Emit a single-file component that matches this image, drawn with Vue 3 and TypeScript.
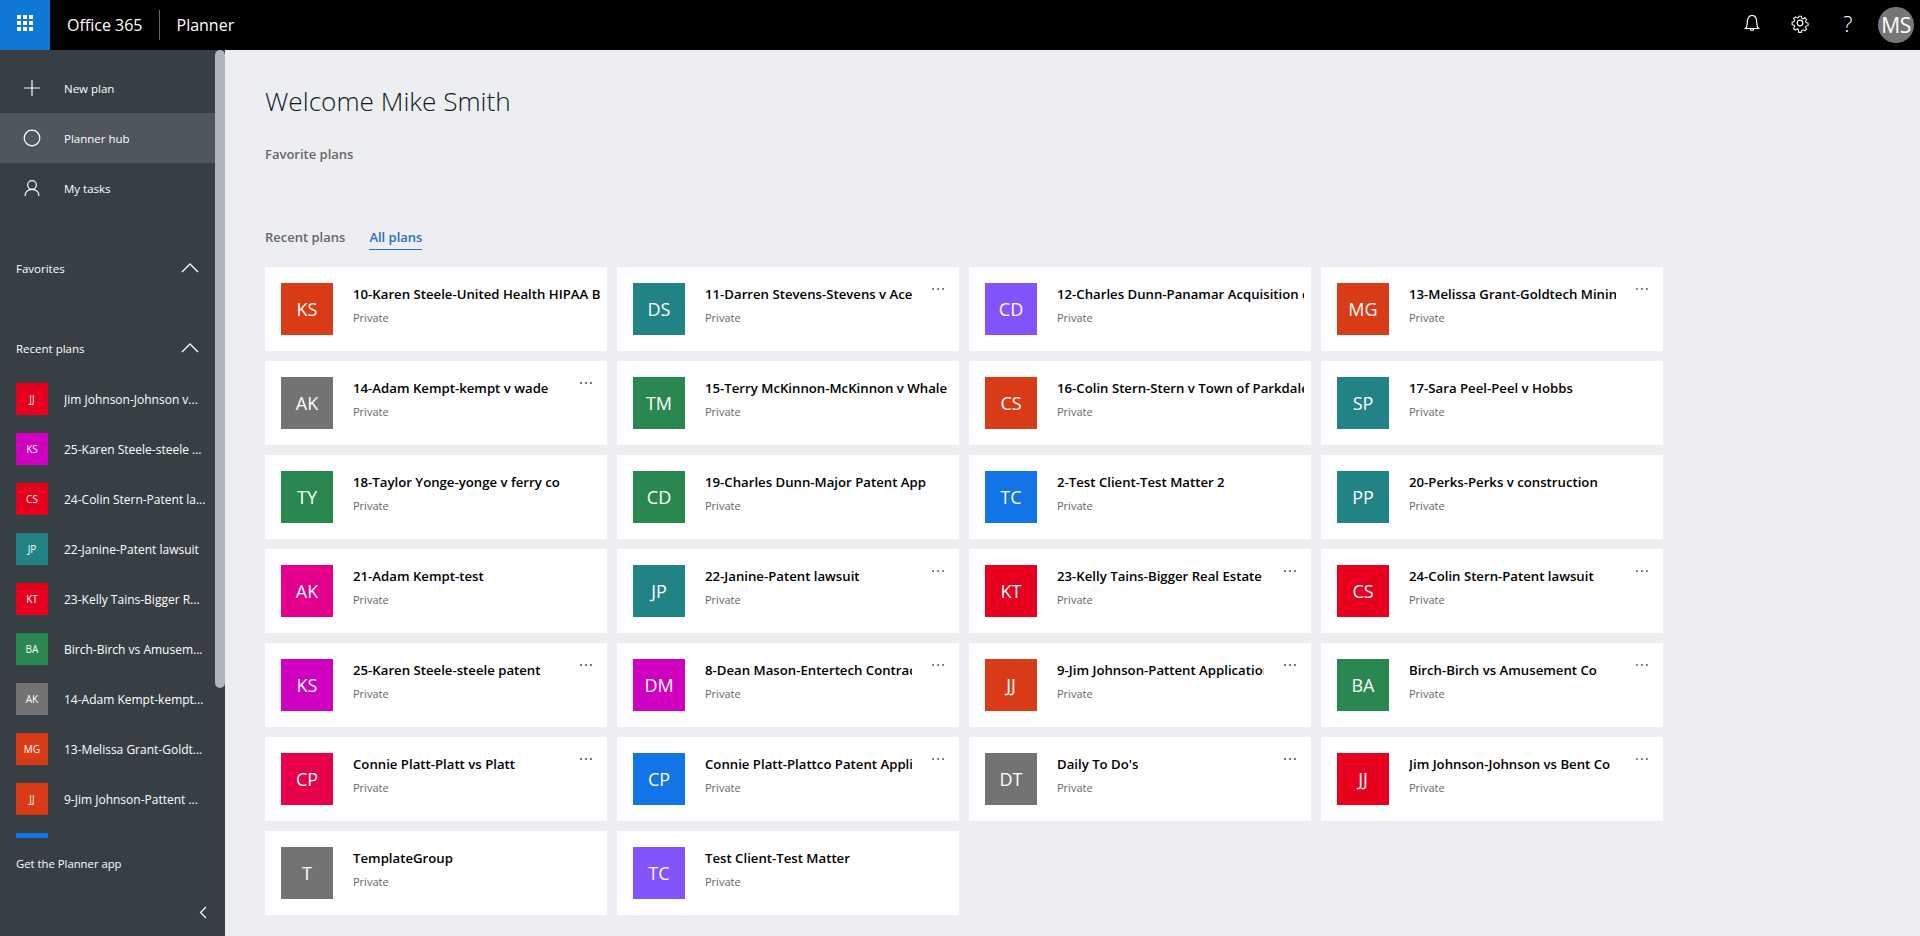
<script setup lang="ts">
interface Plan { name: string; initials: string; color: string; menu?: boolean }
const c = {
  orange: '#d83b16', teal: '#218386', purple: '#8254fb', green: '#2b8750', blue: '#1274e7',
  gray: '#737373', pink: '#e3008c', magenta: '#cf00c0', red: '#e8001f', crimson: '#e8004a'
}
const plans: Plan[] = [
  { name: '10-Karen Steele-United Health HIPAA Breach', initials: 'KS', color: c.orange },
  { name: '11-Darren Stevens-Stevens v Ace', initials: 'DS', color: c.teal, menu: true },
  { name: '12-Charles Dunn-Panamar Acquisition c', initials: 'CD', color: c.purple },
  { name: '13-Melissa Grant-Goldtech Mining Dispute', initials: 'MG', color: c.orange, menu: true },
  { name: '14-Adam Kempt-kempt v wade', initials: 'AK', color: c.gray, menu: true },
  { name: '15-Terry McKinnon-McKinnon v Whale', initials: 'TM', color: c.green },
  { name: '16-Colin Stern-Stern v Town of Parkdale', initials: 'CS', color: c.orange },
  { name: '17-Sara Peel-Peel v Hobbs', initials: 'SP', color: c.teal },
  { name: '18-Taylor Yonge-yonge v ferry co', initials: 'TY', color: c.green },
  { name: '19-Charles Dunn-Major Patent App', initials: 'CD', color: c.green },
  { name: '2-Test Client-Test Matter 2', initials: 'TC', color: c.blue },
  { name: '20-Perks-Perks v construction', initials: 'PP', color: c.teal },
  { name: '21-Adam Kempt-test', initials: 'AK', color: c.pink },
  { name: '22-Janine-Patent lawsuit', initials: 'JP', color: c.teal, menu: true },
  { name: '23-Kelly Tains-Bigger Real Estate', initials: 'KT', color: c.red, menu: true },
  { name: '24-Colin Stern-Patent lawsuit', initials: 'CS', color: c.red, menu: true },
  { name: '25-Karen Steele-steele patent', initials: 'KS', color: c.magenta, menu: true },
  { name: '8-Dean Mason-Entertech Contract Dispute', initials: 'DM', color: c.magenta, menu: true },
  { name: '9-Jim Johnson-Pattent Application', initials: 'JJ', color: c.orange, menu: true },
  { name: 'Birch-Birch vs Amusement Co', initials: 'BA', color: c.green, menu: true },
  { name: 'Connie Platt-Platt vs Platt', initials: 'CP', color: c.crimson, menu: true },
  { name: 'Connie Platt-Plattco Patent Application', initials: 'CP', color: c.blue, menu: true },
  { name: "Daily To Do's", initials: 'DT', color: c.gray, menu: true },
  { name: 'Jim Johnson-Johnson vs Bent Co', initials: 'JJ', color: c.red, menu: true },
  { name: 'TemplateGroup', initials: 'T', color: c.gray },
  { name: 'Test Client-Test Matter', initials: 'TC', color: c.purple }
]
const recent = [
  { name: 'Jim Johnson-Johnson v...', initials: 'JJ', color: c.red },
  { name: '25-Karen Steele-steele ...', initials: 'KS', color: c.magenta },
  { name: '24-Colin Stern-Patent la...', initials: 'CS', color: c.red },
  { name: '22-Janine-Patent lawsuit', initials: 'JP', color: c.teal },
  { name: '23-Kelly Tains-Bigger R...', initials: 'KT', color: c.red },
  { name: 'Birch-Birch vs Amusem...', initials: 'BA', color: c.green },
  { name: '14-Adam Kempt-kempt...', initials: 'AK', color: c.gray },
  { name: '13-Melissa Grant-Goldt...', initials: 'MG', color: c.orange },
  { name: '9-Jim Johnson-Pattent ...', initials: 'JJ', color: c.orange },
  { name: '', initials: '', color: c.blue }
]
</script>

<template>
  <div class="app">
    <header class="topbar">
      <div class="waffle">
        <svg width="16" height="16" viewBox="0 0 16 16" fill="#fff">
          <rect v-for="i in 9" :key="i" :x="(i - 1) % 3 * 6" :y="Math.floor((i - 1) / 3) * 6" width="4" height="4" />
        </svg>
      </div>
      <span class="brand">Office 365</span>
      <span class="divider"></span>
      <span class="product">Planner</span>
      <div class="top-actions">
        <svg class="top-icon bell" width="18" height="18" viewBox="0 0 18 18" fill="none" stroke="#fff" stroke-width="1.2">
          <path d="M2.500 14.500c1-.9 1.700-2 1.700-5.500C4.200 4.500 6 1.300 9 1.300S13.800 4.500 13.800 9c0 3.500.7 4.600 1.700 5.500z" />
          <path d="M7.300 14.700c0 1 .7 1.600 1.700 1.600s1.700-.6 1.700-1.600" />
        </svg>
        <svg class="top-icon gear" width="20" height="20" viewBox="0 0 20 20" fill="none" stroke="#fff" stroke-width="1.2">
          <circle cx="10" cy="10" r="2.800" />
          <path d="M8.500 2h3l.5 2.400 1.500.7 2.100-1.300 2 2.100-1.300 2 .6 1.500 2.400.6v3l-2.400.5-.6 1.500 1.300 2.100-2 2-2.100-1.300-1.500.6-.5 2.400h-3L8 17.400l-1.500-.6-2.100 1.300-2-2 1.300-2.100-.6-1.500L.7 11.900v-3l2.400-.6.6-1.500-1.300-2 2-2.100 2.100 1.300 1.500-.7z" transform="translate(10 10) scale(.86) translate(-9.900 -9.900)" />
        </svg>
        <span class="help">?</span>
        <span class="me">MS</span>
      </div>
    </header>

    <div class="body">
      <aside class="sidebar">
        <div class="side-scroll">
          <nav class="nav">
            <a class="nav-row">
              <svg width="18" height="18" viewBox="0 0 18 18" stroke="#fff" stroke-width="1.200"><path d="M9 1v16M1 9h16" /></svg>
              <span>New plan</span>
            </a>
            <a class="nav-row active">
              <svg width="18" height="18" viewBox="0 0 18 18" fill="none" stroke="#fff" stroke-width="1.200"><circle cx="9" cy="9" r="7.800" /></svg>
              <span>Planner hub</span>
            </a>
            <a class="nav-row">
              <svg width="18" height="18" viewBox="0 0 18 18" fill="none" stroke="#fff" stroke-width="1.200"><circle cx="9" cy="6" r="4.300" /><path d="M2 17c0-4 3-6.700 7-6.700s7 2.700 7 6.700" /></svg>
              <span>My tasks</span>
            </a>
          </nav>
          <div class="sec-head fav">
            <span>Favorites</span>
            <svg width="18" height="10" viewBox="0 0 18 10" fill="none" stroke="#fff" stroke-width="1.300"><path d="M1 9l8-8 8 8" /></svg>
          </div>
          <div class="sec-head rec">
            <span>Recent plans</span>
            <svg width="18" height="10" viewBox="0 0 18 10" fill="none" stroke="#fff" stroke-width="1.300"><path d="M1 9l8-8 8 8" /></svg>
          </div>
          <ul class="recent">
            <li v-for="(r, i) in recent" :key="i">
              <span class="mini" :style="{ background: r.color }">{{ r.initials }}</span>
              <span class="recent-name">{{ r.name }}</span>
            </li>
          </ul>
          <div class="scrollbar"></div>
        </div>
        <div class="side-foot">
          <div class="get-app">Get the Planner app</div>
          <div class="collapse">
            <svg width="8" height="13" viewBox="0 0 8 13" fill="none" stroke="#fff" stroke-width="1.200"><path d="M7 1L1.500 6.500 7 12" /></svg>
          </div>
        </div>
      </aside>

      <main class="main">
        <h1>Welcome Mike Smith</h1>
        <h2>Favorite plans</h2>
        <div class="tabs">
          <span class="tab">Recent plans</span>
          <span class="tab selected">All plans</span>
        </div>
        <section class="grid">
          <article v-for="p in plans" :key="p.name + p.initials" class="card">
            <div class="avatar" :style="{ background: p.color }">{{ p.initials }}</div>
            <div class="info" :class="{ short: p.menu }">
              <div class="title">{{ p.name }}</div>
              <div class="private">Private</div>
            </div>
            <div v-if="p.menu" class="more">
              <i></i><i></i><i></i>
            </div>
          </article>
        </section>
      </main>
    </div>
  </div>
</template>

<style>
html, body { margin: 0; height: 100%; overflow: hidden; }
</style>

<style scoped>
.app { width: 1920px; height: 936px; display: flex; flex-direction: column; font-family: "Open Sans", "Noto Sans", sans-serif; background: #edeef2; }
.topbar { height: 50px; flex: none; background: #000; display: flex; align-items: center; color: #fff; }
.waffle { width: 50px; height: 50px; background: #0f78d4; display: flex; align-items: center; justify-content: center; margin-right: 17px; padding-bottom: 4px; box-sizing: border-box; }
.brand { font-size: 16px; }
.divider { width: 1px; height: 30px; background: #666; margin: 0 17px 0 16px; }
.product { font-size: 16px; }
.top-actions { margin-left: auto; display: flex; align-items: center; }
.top-icon { display: block; margin-top: -4px; }
.bell { margin-right: 29px; }
.gear { margin-right: 33px; }
.help { font-size: 22px; font-weight: 300; width: 10px; line-height: 24px; text-align: center; margin-right: 25px; margin-top: -4px; }
.me { width: 36px; height: 36px; border-radius: 50%; background: #767676; font-size: 21px; display: flex; align-items: center; justify-content: center; margin-right: 6px; letter-spacing: -.5px; }
.body { flex: 1; display: flex; min-height: 0; }
.sidebar { width: 225px; flex: none; background: #373f45; color: #fff; display: flex; flex-direction: column; }
.side-scroll { position: relative; height: 788px; overflow: hidden; padding-top: 13px; box-sizing: border-box; flex: none; }
.scrollbar { position: absolute; top: 0; right: 0; width: 10px; height: 638px; background: #aeb6bc; border-radius: 5px; }
.nav-row { display: flex; align-items: center; height: 50px; padding-left: 23px; width: 215px; box-sizing: border-box; font-size: 11.5px; }
.nav-row svg { margin-right: 23px; flex: none; }
.nav-row.active { background: #4f565d; }
.sec-head { display: flex; justify-content: space-between; align-items: center; width: 215px; box-sizing: border-box; padding: 0 16px; font-size: 11.5px; height: 20px; }
.fav { margin-top: 45px; }
.rec { margin-top: 60px; }
.recent { list-style: none; margin: 25px 0 0; padding: 0; width: 215px; }
.recent li { display: flex; align-items: center; height: 32px; margin-bottom: 18px; padding-left: 16px; }
.mini { width: 32px; height: 32px; flex: none; font-size: 10px; display: flex; align-items: center; justify-content: center; margin-right: 16px; }
.recent-name { font-size: 12px; white-space: nowrap; overflow: hidden; }
.side-foot { flex: 1; position: relative; }
.get-app { font-size: 11.3px; padding: 17px 16px 0; line-height: 18px; }
.collapse { position: absolute; right: 18px; top: 68px; }
.collapse svg { display: block; }
.main { flex: 1; padding-left: 40px; min-width: 0; }
h1 { margin: 0; padding-top: 33px; font-weight: 300; font-size: 26.2px; line-height: 36px; color: #0f1a24; }
h2 { margin: 0; padding-top: 26px; font-size: 13px; line-height: 18px; font-weight: 600; color: #666; }
.tabs { display: flex; margin-top: 64px; gap: 24px; font-size: 13px; font-weight: 600; color: #666; height: 25px; }
.tab { height: 22px; line-height: 20px; }
.tab.selected { color: #2a6fba; border-bottom: 1px solid #2a6fba; }
.grid { margin-top: 15px; display: grid; grid-template-columns: repeat(4, 342px); gap: 10px; }
.card { position: relative; height: 84px; background: #fff; display: flex; padding: 16px 0 16px 16px; box-sizing: border-box; }
.avatar { width: 52px; height: 52px; flex: none; color: #fff; font-size: 18px; display: flex; align-items: center; justify-content: center; margin-right: 20px; }
.info { width: 247px; flex: none; overflow: hidden; }
.info.short { width: 207px; }
.title { font-size: 13.2px; font-weight: 600; color: #000; white-space: nowrap; overflow: hidden; line-height: 18px; margin-top: 2px; }
.private { font-size: 11px; color: #666; line-height: 16px; margin-top: 7px; }
.more { position: absolute; top: 21px; right: 15px; display: flex; gap: 3px; }
.more i { width: 2px; height: 2px; background: #7a7a7a; display: block; }
.card:nth-child(4n + 2) .more i { background: linear-gradient(90deg, #c98a52 50%, #4f82b5 50%); }
.card:nth-child(4n) .more i { background: linear-gradient(90deg, #4f82b5 50%, #c98a52 50%); }
</style>
